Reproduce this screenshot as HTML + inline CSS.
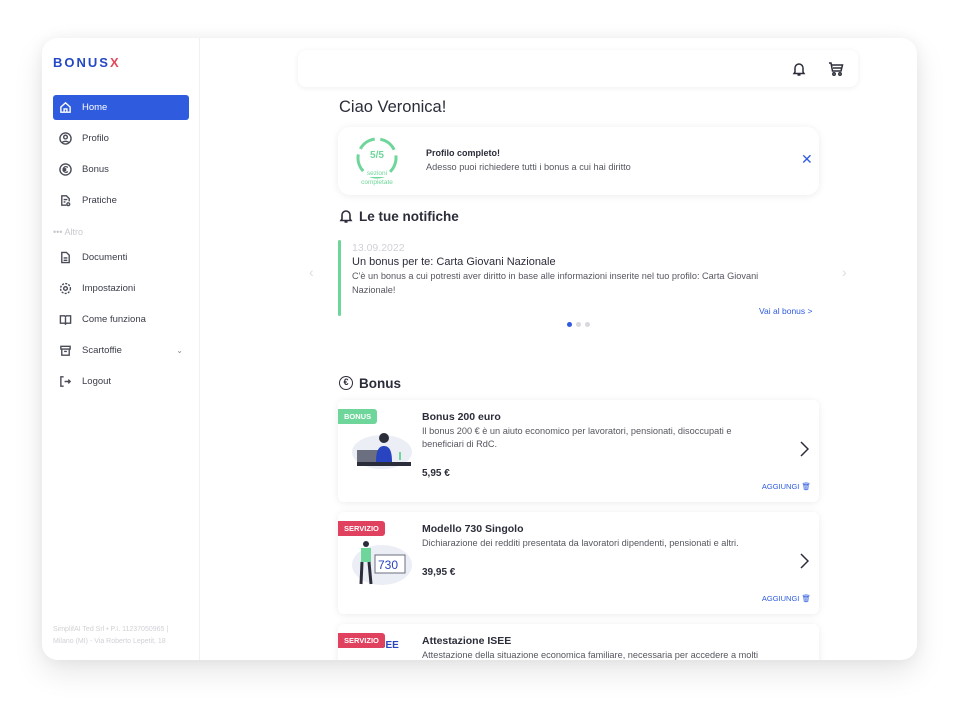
<!DOCTYPE html>
<html><head><meta charset="utf-8">
<style>
*{box-sizing:border-box;margin:0;padding:0}
body{width:970px;height:719px;background:#fff;font-family:"Liberation Sans",sans-serif;color:#2b2d3a;overflow:hidden;position:relative}
.frame{position:absolute;left:42px;top:38px;width:875px;height:622px;background:#fff;border-radius:16px;box-shadow:0 12px 30px rgba(0,0,0,.10),0 0 14px rgba(0,0,0,.05);overflow:hidden}
.side{position:absolute;left:0;top:0;width:158px;height:622px;border-right:1px solid #f0f0f2;background:#fff}
.logo{position:absolute;left:11px;top:17px;font-weight:bold;font-size:13px;letter-spacing:2px;color:#2548c4}
.nav{position:absolute;left:11px;width:136px;height:25px;display:flex;align-items:center;font-size:9.5px;color:#3a3c48}
.nav svg{margin-left:6px;margin-right:10px;width:13px;height:13px;fill:none;stroke:#4a4c58;stroke-width:1.5}
.nav.act{background:#2f5bdf;border-radius:3px;color:#fff}
.nav.act svg{stroke:#fff}
.altro{position:absolute;left:11px;top:189px;font-size:9px;color:#c7c8cf}
.foot{position:absolute;left:11px;top:586px;font-size:7px;line-height:12px;color:#d0d1d6}
.top{position:absolute;left:256px;top:12px;width:560px;height:37px;background:#fff;border-radius:8px;box-shadow:0 1px 6px rgba(0,0,0,.07)}
.h1{position:absolute;left:297px;top:60px;font-size:16.5px;color:#2b2d3a}
.card{position:absolute;background:#fff;border-radius:12px;box-shadow:0 1px 8px rgba(0,0,0,.08)}
.h2{position:absolute;font-size:13.5px;font-weight:bold;color:#2b2d3a}
.tag{position:absolute;left:0;top:9px;height:15px;padding:0 6px;font-size:7.5px;font-weight:bold;color:#fff;line-height:15px;border-radius:0 3px 3px 0}
.ct{position:absolute;left:84px;font-size:10.5px;font-weight:bold;color:#2b2d3a}
.cd{position:absolute;left:84px;width:345px;font-size:9.2px;line-height:13px;color:#55575f}
.pr{position:absolute;left:84px;font-size:10px;font-weight:bold}
.add{position:absolute;right:8px;font-size:7.5px;color:#2f5bdf}
.arr{position:absolute;right:10px;top:41px}
</style></head><body>
<div class="frame">
 <div class="side">
  <div class="logo">BONUS<span style="color:#e04a5a">X</span></div>
  <div class="nav act" style="top:57px"><svg viewBox="0 0 14 14"><path d="M2 6.5L7 2l5 4.5V12H2z M5.5 12V8.5h3V12"/></svg>Home</div>
  <div class="nav" style="top:88px"><svg viewBox="0 0 14 14"><circle cx="7" cy="7" r="6"/><circle cx="7" cy="5.5" r="2"/><path d="M3.5 11.5c1-2 6-2 7 0"/></svg>Profilo</div>
  <div class="nav" style="top:119px"><svg viewBox="0 0 14 14"><circle cx="7" cy="7" r="6"/><path d="M9.5 4.8a3 3 0 1 0 0 4.4M3.8 6.3h4M3.8 7.8h4"/></svg>Bonus</div>
  <div class="nav" style="top:150px"><svg viewBox="0 0 14 14"><path d="M8 12H3V2h5l3 3v3M5 6h4M5 8.5h2"/><circle cx="10" cy="11" r="1.5"/></svg>Pratiche</div>
  <div class="altro">••• Altro</div>
  <div class="nav" style="top:207px"><svg viewBox="0 0 14 14"><path d="M3 1.5h5l3 3v8H3z M5 7.5h4M5 10h4"/></svg>Documenti</div>
  <div class="nav" style="top:238px"><svg viewBox="0 0 14 14"><circle cx="7" cy="7" r="2"/><circle cx="7" cy="7" r="5.3" stroke-dasharray="2.2 1.3"/></svg>Impostazioni</div>
  <div class="nav" style="top:269px"><svg viewBox="0 0 14 14"><path d="M1.5 3h4.5l1 1 1-1h4.5v8H8l-1 1-1-1H1.5z M7 4v8"/></svg>Come funziona</div>
  <div class="nav" style="top:300px"><svg viewBox="0 0 14 14"><path d="M2 2.5h10v3H2z M3 5.5V12h8V5.5 M5.5 8h3"/></svg>Scartoffie<span style="position:absolute;right:6px;font-size:8px;color:#888">⌄</span></div>
  <div class="nav" style="top:331px"><svg viewBox="0 0 14 14"><path d="M5 2H2v10h3 M6 7h6 M10 5l2 2-2 2"/></svg>Logout</div>
  <div class="foot">SimplifAI Ted Srl • P.I. 11237050965 |<br>Milano (MI) - Via Roberto Lepetit, 18</div>
 </div>
 <div class="top">
  <svg style="position:absolute;left:494px;top:12px" width="14" height="15" viewBox="0 0 14 15" fill="none" stroke="#2b2d3a" stroke-width="1.5"><path d="M3 10V6a4 4 0 0 1 8 0v4l1 1.5H2z M5.5 13h3"/></svg>
  <svg style="position:absolute;left:530px;top:11px" width="16" height="16" viewBox="0 0 16 16" fill="none" stroke="#2b2d3a" stroke-width="1.5"><path d="M1 2h2l1.5 8h8.5l1.5-6H4 M5 7h8.5"/><circle cx="6" cy="13" r="1.2"/><circle cx="12" cy="13" r="1.2"/></svg>
 </div>
 <div class="h1">Ciao Veronica!</div>
 <div class="card" style="left:296px;top:89px;width:481px;height:68px">
  <svg style="position:absolute;left:18px;top:10px" width="42" height="42" viewBox="0 0 42 42"><circle cx="21" cy="21" r="19" fill="none" stroke="#6ed69a" stroke-width="3" stroke-dasharray="18 5.9" transform="rotate(-80 21 21)"/></svg>
  <div style="position:absolute;left:18px;top:23px;width:42px;text-align:center;font-size:10px;font-weight:bold;color:#6ed69a">5/5</div>
  <div style="position:absolute;left:12px;top:42px;width:54px;text-align:center;font-size:6.5px;line-height:9px;color:#6ed69a"><span style="background:#fff;padding:0 1px">sezioni</span><br><span style="background:#fff">completate</span></div>
  <div style="position:absolute;left:88px;top:21px;font-size:9px;font-weight:bold">Profilo completo!</div>
  <div style="position:absolute;left:88px;top:35px;font-size:9.2px;color:#55575f">Adesso puoi richiedere tutti i bonus a cui hai diritto</div>
  <div style="position:absolute;left:463px;top:24px;font-size:14px;color:#2f5bdf">✕</div>
 </div>
 <svg style="position:absolute;left:297px;top:171px" width="14" height="15" viewBox="0 0 14 15" fill="none" stroke="#2b2d3a" stroke-width="1.6"><path d="M3 10V6a4 4 0 0 1 8 0v4l1 1.5H2z M5.5 13h3"/></svg>
 <div class="h2" style="left:317px;top:171px">Le tue notifiche</div>
 <div style="position:absolute;left:267px;top:226px;color:#ddd;font-size:14px">‹</div>
 <div style="position:absolute;left:800px;top:226px;color:#ddd;font-size:14px">›</div>
 <div style="position:absolute;left:296px;top:202px;width:3px;height:76px;background:#6ed69a;border-radius:2px"></div>
 <div style="position:absolute;left:310px;top:204px;font-size:10.5px;color:#d0d1d6">13.09.2022</div>
 <div style="position:absolute;left:310px;top:218px;font-size:11px;color:#2b2d3a">Un bonus per te: Carta Giovani Nazionale</div>
 <div style="position:absolute;left:310px;top:232px;width:445px;font-size:9.2px;line-height:13.5px;color:#55575f">C'è un bonus a cui potresti aver diritto in base alle informazioni inserite nel tuo profilo: Carta Giovani Nazionale!</div>
 <div style="position:absolute;left:717px;top:268px;font-size:8.5px;color:#2f5bdf">Vai al bonus &gt;</div>
 <div style="position:absolute;left:525px;top:284px;width:5px;height:5px;border-radius:50%;background:#2f5bdf"></div>
 <div style="position:absolute;left:534px;top:284px;width:5px;height:5px;border-radius:50%;background:#d8d9de"></div>
 <div style="position:absolute;left:543px;top:284px;width:5px;height:5px;border-radius:50%;background:#d8d9de"></div>
 <div style="position:absolute;left:297px;top:338px;width:14px;height:14px;border:1.5px solid #2b2d3a;border-radius:50%;font-size:9px;font-weight:bold;text-align:center;line-height:11px">€</div>
 <div class="h2" style="left:317px;top:338px">Bonus</div>

 <div class="card" style="left:296px;top:362px;width:481px;height:102px;border-radius:6px">
  <div class="tag" style="background:#6ed69a">BONUS</div>
  <svg style="position:absolute;left:14px;top:30px" width="62" height="42" viewBox="0 0 62 42"><ellipse cx="30" cy="22" rx="30" ry="17" fill="#eceef5"/><rect x="5" y="20" width="22" height="12" fill="#6b6f80"/><rect x="5" y="32" width="54" height="4" fill="#2b2d3a"/><circle cx="32" cy="8" r="5" fill="#2b2d3a"/><path d="M24 32c0-10 2-16 8-16s8 6 8 16z" fill="#2844c0"/><path d="M48 30v-8" stroke="#6ed69a" stroke-width="2"/></svg>
  <div class="ct" style="top:11px">Bonus 200 euro</div>
  <div class="cd" style="top:25px">Il bonus 200 € è un aiuto economico per lavoratori, pensionati, disoccupati e beneficiari di RdC.</div>
  <div class="pr" style="top:68px">5,95 €</div>
  <svg class="arr" width="10" height="16" viewBox="0 0 10 16"><path d="M2 1l7 7-7 7" fill="none" stroke="#2b2d3a" stroke-width="1.5"/></svg>
  <div class="add" style="top:82px">AGGIUNGI 🗑</div>
 </div>
 <div class="card" style="left:296px;top:474px;width:481px;height:102px;border-radius:6px">
  <div class="tag" style="background:#e0415f">SERVIZIO</div>
  <svg style="position:absolute;left:14px;top:26px" width="62" height="50" viewBox="0 0 62 50"><ellipse cx="30" cy="27" rx="30" ry="20" fill="#eceef5"/><circle cx="14" cy="6" r="3" fill="#2b2d3a"/><path d="M9 10h10v14H9z" fill="#6ed69a"/><path d="M10 24l-1 22M17 24l2 22" stroke="#2b2d3a" stroke-width="3"/><rect x="23" y="17" width="30" height="18" fill="#fff" stroke="#6b6f80"/><text x="26" y="31" font-size="12" font-family="Liberation Sans" fill="#2844c0">730</text></svg>
  <div class="ct" style="top:11px">Modello 730 Singolo</div>
  <div class="cd" style="top:25px;width:400px">Dichiarazione dei redditi presentata da lavoratori dipendenti, pensionati e altri.</div>
  <div class="pr" style="top:55px">39,95 €</div>
  <svg class="arr" width="10" height="16" viewBox="0 0 10 16"><path d="M2 1l7 7-7 7" fill="none" stroke="#2b2d3a" stroke-width="1.5"/></svg>
  <div class="add" style="top:82px">AGGIUNGI 🗑</div>
 </div>
 <div class="card" style="left:296px;top:586px;width:481px;height:60px;border-radius:6px">
  <div style="position:absolute;left:38px;top:16px;font-size:10px;font-weight:bold;color:#2844c0">ISEE</div>
  <div class="tag" style="background:#e0415f">SERVIZIO</div>
  <div class="ct" style="top:11px">Attestazione ISEE</div>
  <div class="cd" style="top:25px;width:400px">Attestazione della situazione economica familiare, necessaria per accedere a molti</div>
 </div>
</div>
</body></html>
